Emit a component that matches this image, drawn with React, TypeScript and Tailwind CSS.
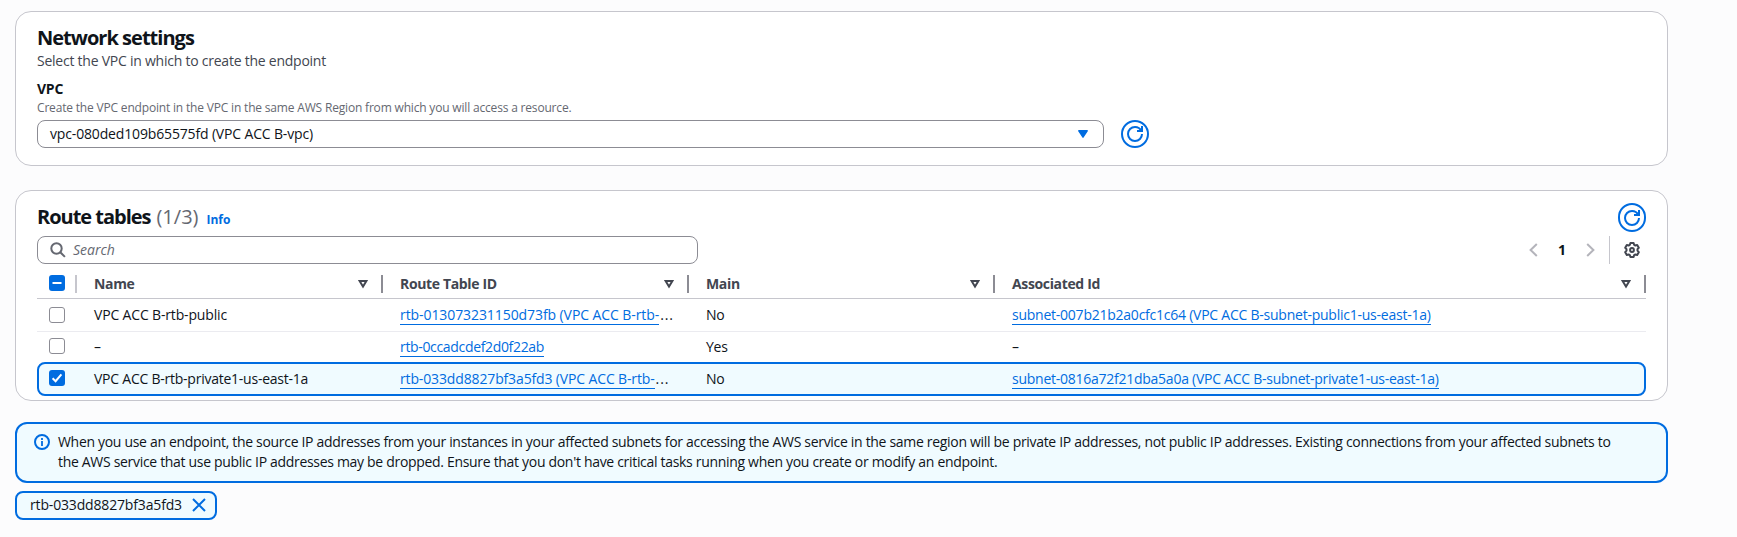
import type { ReactNode } from "react";

function RefreshButton({ className = "" }: { className?: string }) {
  return (
    <button
      aria-label="Refresh"
      className={`flex w-7 shrink-0 items-center justify-center rounded-full border-2 border-[#006ce0] bg-white text-[#006ce0] ${className}`}
    >
      <svg className="h-4 w-4 shrink-0" viewBox="0 0 16 16" fill="none" stroke="currentColor" strokeWidth="2">
        <path d="M15 8c0 3.87-3.13 7-7 7s-7-3.13-7-7 3.13-7 7-7c2.79 0 5.2 1.63 6.33 4" />
        <path d="M10 5h5V0" />
      </svg>
    </button>
  );
}

function SortIcon() {
  return (
    <svg className="h-[9px] w-[10px] shrink-0" viewBox="0 0 10 9" fill="none" stroke="#424650" strokeWidth="2">
      <path d="M1.6 1h6.8L5 6.600z" />
    </svg>
  );
}

function Check({ state = "off" }: { state?: "off" | "on" | "mixed" }) {
  if (state === "off") {
    return <span className="block h-4 w-4 rounded-[3px] border border-[#8c8c94] bg-white" />;
  }
  return (
    <span className="block h-4 w-4 rounded-[3px] bg-[#006ce0]">
      <svg viewBox="0 0 16 16" className="h-4 w-4" fill="none" stroke="#fff" strokeWidth="2">
        {state === "on" ? <path d="M3.6 8.2 6.6 11.2 12.4 4.4" /> : <path d="M3.5 8h9" />}
      </svg>
    </span>
  );
}

function HeaderCell({ children, last = false }: { children: ReactNode; last?: boolean }) {
  return (
    <div className={`flex h-[18px] items-center ${last ? "" : "mr-[17px]"}`}>
      <span className="grow font-bold leading-5 text-[#424650]">{children}</span>
      <SortIcon />
      <span className="ml-[13px] h-[18px] w-[2px] bg-[#8c8c94]" />
    </div>
  );
}

function Link({ children, className = "" }: { children: ReactNode; className?: string }) {
  return (
    <a className={`inline-block h-5 whitespace-nowrap border-b border-[#006ce0] text-[#006ce0] ${className}`}>
      {children}
    </a>
  );
}

export default function App() {
  return (
    <main className="flex h-[537px] w-[1737px] flex-col items-start overflow-hidden bg-[#fcfcfd] pl-[15px] pt-[11px] font-['Open_Sans','Noto_Sans',sans-serif] text-[14px] leading-5 tracking-[-0.24px] text-[#0f141a]">
      <section className="h-[155px] w-[1653px] rounded-2xl border border-[#c6c6cd] bg-white px-[21px] pt-[14px]">
        <h2 className="text-[20px] font-bold leading-6 tracking-[-0.98px]">Network settings</h2>
        <p className="mt-px text-[#424650]">Select the VPC in which to create the endpoint</p>
        <p className="mt-2 font-bold">VPC</p>
        <p className="mt-px text-[12px] leading-4 tracking-[-0.18px] text-[#656871]">
          Create the VPC endpoint in the VPC in the same AWS Region from which you will access a resource.
        </p>
        <div className="mt-1 flex gap-[17px]">
          <div className="flex h-7 w-[1067px] items-center justify-between rounded-lg border border-[#8c8c94] pl-3 pr-[15px] tracking-[-0.155px]">
            <span>vpc-080ded109b65575fd (VPC ACC B-vpc)</span>
            <svg className="h-2 w-[10px]" viewBox="0 0 10 8">
              <path d="M.8.8h8.4L5 7.2z" fill="#006ce0" stroke="#006ce0" strokeWidth="1.4" strokeLinejoin="round" />
            </svg>
          </div>
          <RefreshButton className="h-7" />
        </div>
      </section>

      <section className="mt-6 h-[211px] w-[1653px] rounded-2xl border border-[#c6c6cd] bg-white px-[21px] pt-3">
        <div className="flex h-[29px] items-start justify-between">
          <div className="flex items-baseline pt-[2px]">
            <h2 className="text-[20px] font-bold leading-6 tracking-[-1.02px]">Route tables</h2>
            <span className="ml-[6px] text-[20px] leading-6 tracking-normal text-[#656871]">(1/3)</span>
            <a className="ml-2 text-[12px] font-bold tracking-normal text-[#006ce0]">Info</a>
          </div>
          <RefreshButton className="h-[29px]" />
        </div>

        <div className="mt-1 flex h-7 items-center justify-between">
          <div className="flex h-7 w-[661px] items-center rounded-lg border border-[#8c8c94] pl-3">
            <svg className="h-4 w-4" viewBox="0 0 16 16" fill="none" stroke="#656871" strokeWidth="2">
              <circle cx="6.5" cy="6.5" r="5.2" />
              <path d="m10.3 10.3 4.6 4.6" />
            </svg>
            <span className="ml-[7px] italic tracking-normal text-[#656871]">Search</span>
          </div>
          <div className="flex items-center pr-[6px]">
            <svg className="h-[14px] w-[9px]" viewBox="0 0 9 14" fill="none" stroke="#b4b4bb" strokeWidth="2">
              <path d="M7.800 1 1.600 7l6.200 6" />
            </svg>
            <span className="w-[48px] text-center font-bold">1</span>
            <svg className="h-[14px] w-[9px]" viewBox="0 0 9 14" fill="none" stroke="#b4b4bb" strokeWidth="2">
              <path d="m1.200 1 6.200 6-6.200 6" />
            </svg>
            <span className="ml-[14px] h-7 w-px bg-[#c6c6cd]" />
            <svg
              className="ml-[14px] h-4 w-4"
              viewBox="0 0 16 16"
              fill="none"
              stroke="#424650"
              strokeWidth="2"
              strokeLinejoin="round"
            >
              <path d="M6.4 1h3.2l.5 1.8 1.3.7 1.8-.5L14.8 5.7l-1.3 1.4v1.6l1.3 1.5-1.6 2.7-1.8-.4-1.3.7L9.6 15H6.4l-.5-1.8-1.3-.7-1.8.4-1.6-2.7 1.3-1.5V7.1L1.2 5.7 2.8 3l1.8.5 1.3-.7z" />
              <circle cx="8" cy="8" r="1.9" />
            </svg>
          </div>
        </div>

        <div className="grid h-[35px] grid-cols-[57px_306px_306px_306px_634px] border-b border-[#c6c6cd] pt-[11px] tracking-[-0.35px]">
          <div className="flex items-start">
            <span className="ml-3">
              <Check state="mixed" />
            </span>
            <span className="ml-[10px] h-[18px] w-[2px] bg-[#c6c6cd]" />
          </div>
          <HeaderCell>Name</HeaderCell>
          <HeaderCell>Route Table ID</HeaderCell>
          <HeaderCell>Main</HeaderCell>
          <HeaderCell last>Associated Id</HeaderCell>
        </div>

        <div className="grid h-[33px] grid-cols-[57px_306px_306px_306px_634px] border-b border-[#ebebf0] pt-[6px]">
          <span className="ml-3 mt-[2px]">
            <Check />
          </span>
          <span className="tracking-[-0.16px]">VPC ACC B-rtb-public</span>
          <span className="flex tracking-[-0.08px]">
            <Link>rtb-013073231150d73fb (VPC ACC B-rtb-</Link>
            <span className="ml-px tracking-[0.9px]">...</span>
          </span>
          <span>No</span>
          <span>
            <Link>subnet-007b21b2a0cfc1c64 (VPC ACC B-subnet-public1-us-east-1a)</Link>
          </span>
        </div>

        <div className="grid h-[30px] grid-cols-[57px_306px_306px_306px_634px] pt-[5px]">
          <span className="ml-3 mt-[1px]">
            <Check />
          </span>
          <span>–</span>
          <span>
            <Link className="tracking-[-0.335px]">rtb-0ccadcdef2d0f22ab</Link>
          </span>
          <span>Yes</span>
          <span>–</span>
        </div>

        <div className="grid h-[34px] grid-cols-[55px_306px_306px_306px_632px] rounded-lg border-2 border-[#006ce0] bg-[#f0fbff] pt-[5px]">
          <span className="ml-[10px] mt-[1px]">
            <Check state="on" />
          </span>
          <span>VPC ACC B-rtb-private1-us-east-1a</span>
          <span className="flex tracking-[-0.14px]">
            <Link>rtb-033dd8827bf3a5fd3 (VPC ACC B-rtb-</Link>
            <span className="ml-px tracking-[0.9px]">...</span>
          </span>
          <span>No</span>
          <span>
            <Link className="tracking-[-0.255px]">subnet-0816a72f21dba5a0a (VPC ACC B-subnet-private1-us-east-1a)</Link>
          </span>
        </div>
      </section>

      <section className="mt-[21px] flex h-[61px] w-[1653px] rounded-xl border-2 border-[#006ce0] bg-[#f0fbff] pl-[17px] pt-2">
        <svg className="mt-[2px] h-4 w-4 shrink-0" viewBox="0 0 16 16" fill="none" stroke="#006ce0" strokeWidth="2">
          <circle cx="8" cy="8" r="7" />
          <path d="M8 4v2M8 7v5" strokeWidth="1.8" />
        </svg>
        <p className="ml-2 whitespace-nowrap tracking-[-0.312px]">
          When you use an endpoint, the source IP addresses from your instances in your affected subnets for accessing
          the AWS service in the same region will be private IP addresses, not public IP addresses. Existing connections
          from your affected subnets to
          <br />
          the AWS service that use public IP addresses may be dropped. Ensure that you don't have critical tasks running
          when you create or modify an endpoint.
        </p>
      </section>

      <div className="mt-2 flex h-[29px] w-[202px] items-start rounded-lg border-2 border-[#006ce0] bg-[#f0fbff] pl-[13px] pt-[2px]">
        <span className="w-[152px] whitespace-nowrap tracking-[-0.16px]">rtb-033dd8827bf3a5fd3</span>
        <svg
          className="ml-[10px] mt-[3px] h-[14px] w-[14px]"
          viewBox="0 0 14 14"
          fill="none"
          stroke="#006ce0"
          strokeWidth="2"
        >
          <path d="m1 1 12 12M13 1 1 13" />
        </svg>
      </div>
    </main>
  );
}
